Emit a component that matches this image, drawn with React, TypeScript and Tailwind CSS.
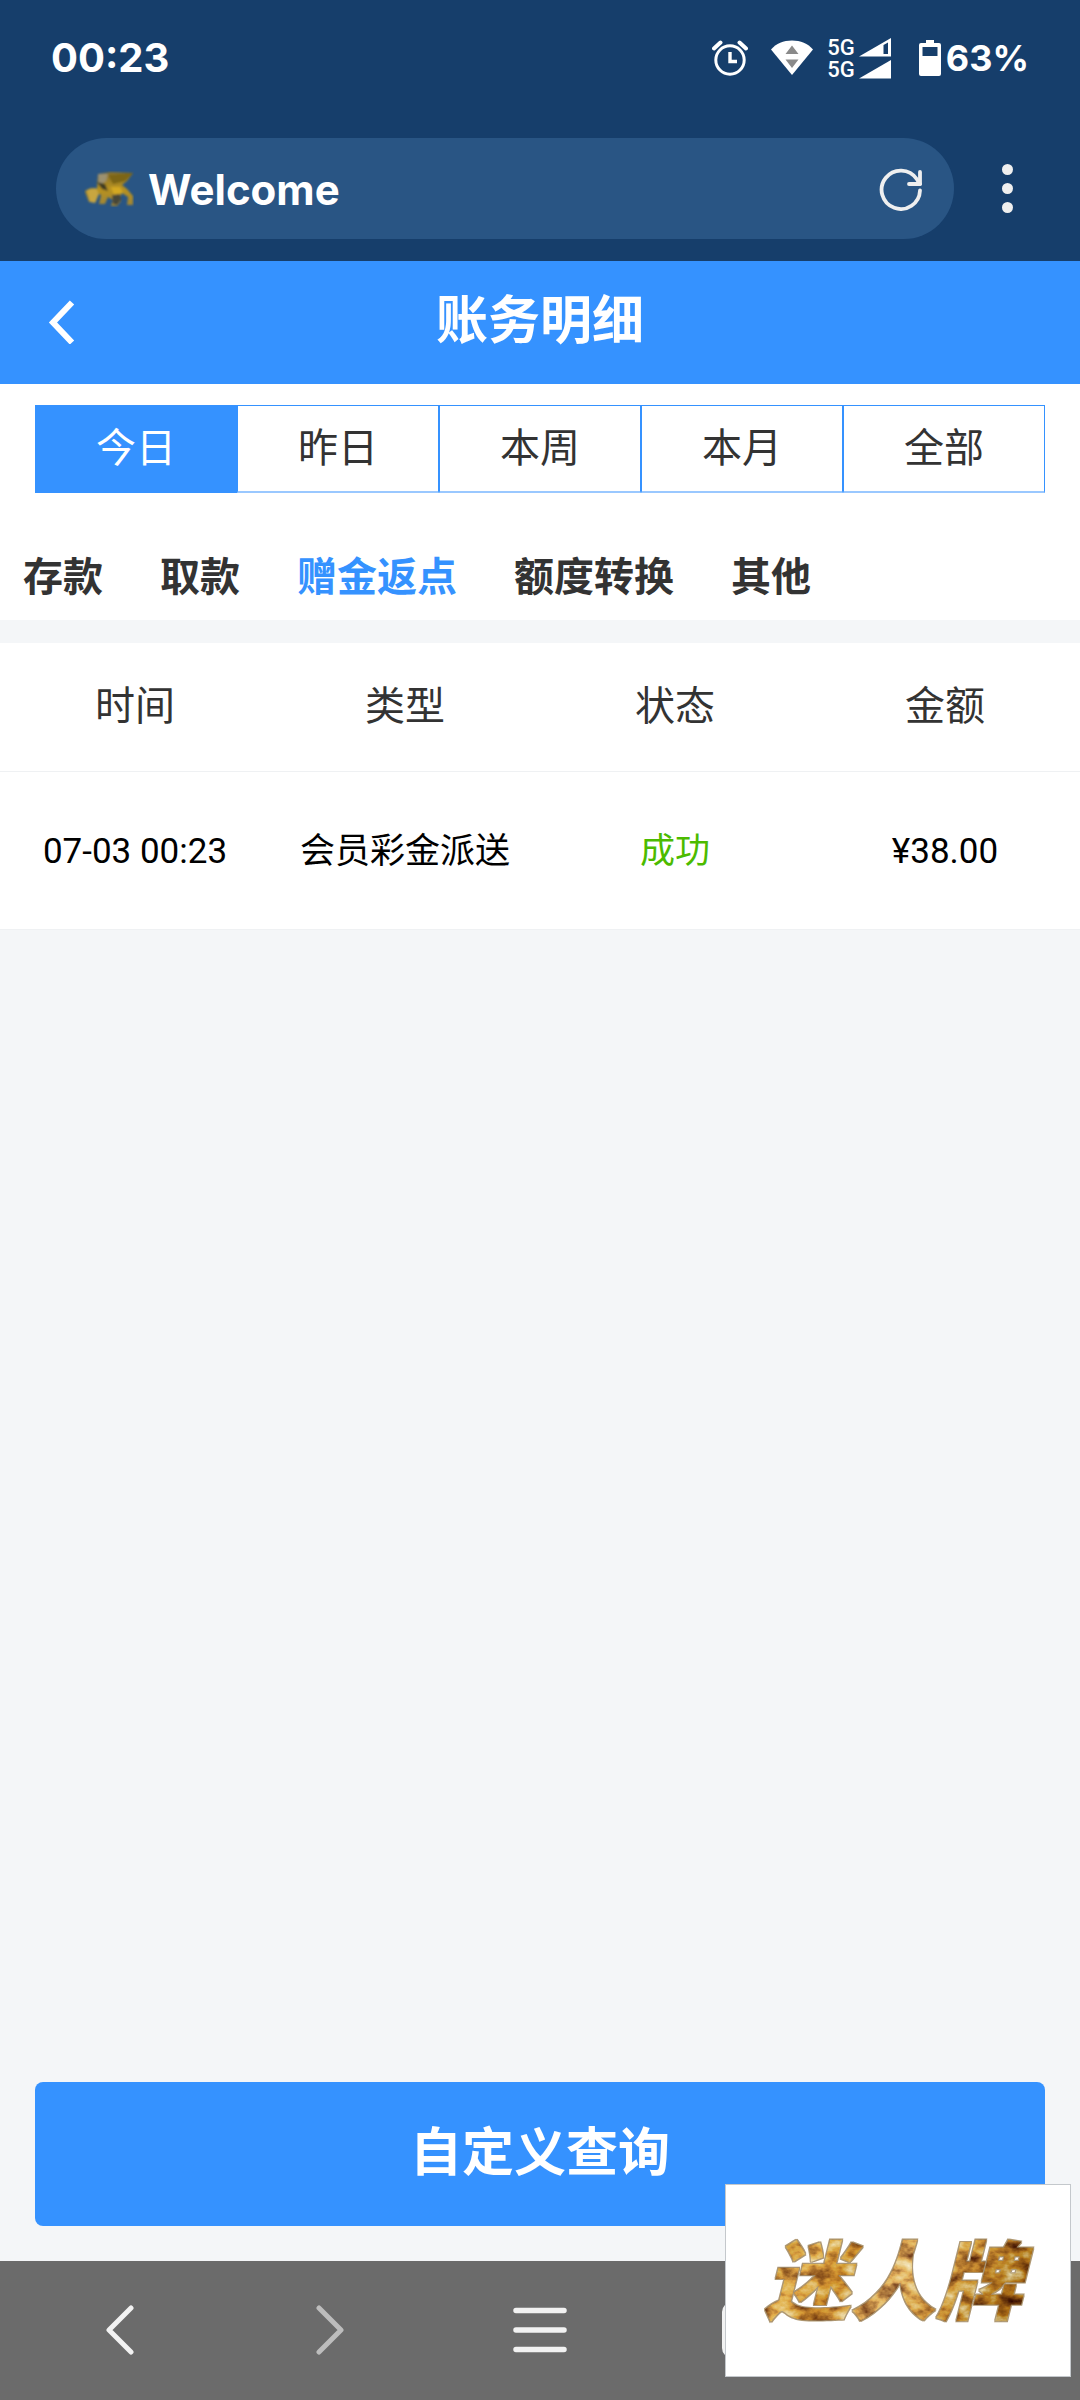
import { useState } from "react";

const cjk = "font-[Roboto,'Noto_Sans_CJK_SC',sans-serif]";

const PERIODS = ["今日", "昨日", "本周", "本月", "全部"];
const CATEGORIES = ["存款", "取款", "赠金返点", "额度转换", "其他"];
const RECORDS = [
  { time: "07-03 00:23", type: "会员彩金派送", status: "成功", amount: "¥38.00" },
];

function AlarmIcon() {
  return (
    <svg className="h-9 w-9" viewBox="0 0 36 36" fill="none" stroke="white" aria-hidden="true">
      <circle cx="18" cy="20" r="14.2" strokeWidth="3" />
      <path d="M18 12v9.5h7" strokeWidth="3.4" />
      <path d="M2 8.5 8.5 2.5M34 8.5 27.5 2.5" strokeWidth="4" strokeLinecap="round" />
    </svg>
  );
}

function WifiIcon() {
  return (
    <svg className="h-9 w-[42px]" viewBox="0 0 42 36" aria-hidden="true">
      <path d="M0 9.5C5 3.5 12.5.5 21 .5S37 3.5 42 9.5L21 35Z" fill="white" />
      <path d="M21 5.5 27.5 14h-13ZM21 28l-6.5-8.5h13Z" fill="#8a8a8a" />
    </svg>
  );
}

function SignalIcon({ partial = false }: { partial?: boolean }) {
  return (
    <svg className="h-[19px] w-8" viewBox="0 0 32 19" aria-hidden="true">
      <path d="M0 18.5 32 0v18.5Z" fill="white" />
      {partial && <path d="M24.5 7 29 4.5V16h-4.5Z" fill="#163e6b" />}
    </svg>
  );
}

function BatteryIcon() {
  return (
    <svg className="h-9 w-[22px]" viewBox="0 0 22 36" aria-hidden="true">
      <path d="M7 0h8v3h5a2 2 0 0 1 2 2v29a2 2 0 0 1-2 2H2a2 2 0 0 1-2-2V5a2 2 0 0 1 2-2h5Z" fill="white" />
      <path d="M3.5 7h15v9h-15Z" fill="#163e6b" />
    </svg>
  );
}

function LionIcon() {
  return (
    <svg className="h-9 w-[50px]" viewBox="0 0 50 36" aria-hidden="true">
      <defs>
        <linearGradient id="lion" x1="0" y1="0" x2="0" y2="1">
          <stop offset="0" stopColor="#85702f" />
          <stop offset=".5" stopColor="#b8921f" />
          <stop offset="1" stopColor="#9d8438" />
        </linearGradient>
        <filter id="soft"><feGaussianBlur stdDeviation="1" /></filter>
      </defs>
      <g filter="url(#soft)">
        <path d="M14 3 27 1l22 1-6 8-5 4 5 4 6 7v9h-6l1-8-6-4-2 4 1 4-4 5h-6l2-6-5-3-3 7h-6l2-9-4-2-1 9H5L1 20l6-3 6 1Z" fill="url(#lion)" />
        <path d="M14 3h10l-2 7-7 5Z" fill="#9c9170" />
        <path d="M24 4 49 2l-8 8-12 3Z" fill="#7c6515" />
        <path d="m13 11 8 2 3 7-6-2Z" fill="#3c3a20" />
        <path d="m27 16 9 0 3 6-9 2Z" fill="#d3a823" />
        <path d="m28 24 8-1 1 6-4 5-4-1Z" fill="#474637" />
        <path d="m3 19 9-2 3 6-4 9-5-1Z" fill="#c8a640" />
      </g>
    </svg>
  );
}

function BrandLogo() {
  return (
    <svg className="h-[140px] w-[320px]" viewBox="0 0 320 140" role="img" aria-label="迷人牌">
      <defs>
        <linearGradient id="gold" x1="0" y1="0" x2="1" y2=".3">
          <stop offset="0" stopColor="#b07a1c" />
          <stop offset=".25" stopColor="#e0b054" />
          <stop offset=".4" stopColor="#cc9230" />
          <stop offset=".6" stopColor="#e4bc70" />
          <stop offset=".8" stopColor="#d09c40" />
          <stop offset="1" stopColor="#a8701a" />
        </linearGradient>
        <filter id="foil" x="-10%" y="-10%" width="120%" height="120%" colorInterpolationFilters="sRGB">
          <feTurbulence type="fractalNoise" baseFrequency="0.05 0.07" numOctaves="4" seed="7" result="noise" />
          <feColorMatrix in="noise" type="matrix" values="0.9 0 0 0 .05  1.1 0 0 0 -.08  1.1 0 0 0 -.12  0 0 0 0 1" result="tone" />
          <feBlend in="tone" in2="SourceGraphic" mode="hard-light" result="mix" />
          <feComposite in="mix" in2="SourceAlpha" operator="in" result="face" />
          <feMorphology in="SourceAlpha" operator="dilate" radius="0.6" result="fat" />
          <feFlood floodColor="#7a5210" floodOpacity=".6" />
          <feComposite in2="fat" operator="in" result="edge" />
          <feMerge>
            <feMergeNode in="edge" />
            <feMergeNode in="face" />
          </feMerge>
        </filter>
      </defs>
      <text
        x="155"
        y="102"
        textAnchor="middle"
        fill="url(#gold)"
        filter="url(#foil)"
        className="font-['Noto_Sans_CJK_SC',sans-serif] text-[86px] font-black italic"
      >
        迷人牌
      </text>
    </svg>
  );
}

function StatusBar() {
  return (
    <div className="flex h-[116px] items-center justify-between pr-[51px] pl-[51px] font-[Inter,sans-serif] font-bold text-white">
      <span className="text-[40px]">00:23</span>
      <div className="flex items-center">
        <AlarmIcon />
        <div className="ml-[23px]"><WifiIcon /></div>
        <div className="ml-[14px] flex flex-col gap-[3px] font-[Roboto,sans-serif] text-[22px] leading-[19px] font-medium">
          <div className="flex items-center gap-1">5G <SignalIcon partial /></div>
          <div className="flex items-center gap-1">5G <SignalIcon /></div>
        </div>
        <div className="mr-[5px] ml-7"><BatteryIcon /></div>
        <span className="text-[36px]">63%</span>
      </div>
    </div>
  );
}

function AddressBar() {
  return (
    <div className="flex items-center pt-[22px] pb-[22px] pl-14">
      <div className="flex h-[101px] flex-1 items-center rounded-full bg-[#295584] pr-[31px] pl-7">
        <LionIcon />
        <span className="ml-[14px] flex-1 pt-0.5 font-[Inter,sans-serif] text-[42px] font-bold text-white">Welcome</span>
        <button type="button" aria-label="Reload">
          <svg className="h-11 w-11" viewBox="0 0 44 44" fill="none" stroke="#efefef" strokeWidth="3.8" strokeLinecap="round" strokeLinejoin="round" aria-hidden="true">
            <path d="M41 23.5a19.2 19.2 0 1 1-3.3-11.5L41 17" />
            <path d="M41 5v12H30" />
          </svg>
        </button>
      </div>
      <button type="button" aria-label="Menu" className="flex w-[126px] flex-col items-center gap-2 pr-5">
        <span className="size-[11px] rounded-full bg-[#efefef]" />
        <span className="size-[11px] rounded-full bg-[#efefef]" />
        <span className="size-[11px] rounded-full bg-[#efefef]" />
      </button>
    </div>
  );
}

function BrowserNav() {
  return (
    <nav className="grid h-[139px] grid-cols-5 bg-[#6b6b6b] px-[15px] pb-0.5">
      <button type="button" aria-label="Back" className="flex items-center justify-center text-[#f2f2f2]">
        <svg className="h-[50px] w-7" viewBox="0 0 28 50" fill="none" stroke="currentColor" strokeWidth="5" strokeLinecap="round" strokeLinejoin="round" aria-hidden="true"><path d="M25 3 3 25l22 22" /></svg>
      </button>
      <button type="button" aria-label="Forward" className="flex items-center justify-center text-[#bdbdbd]">
        <svg className="h-[50px] w-7" viewBox="0 0 28 50" fill="none" stroke="currentColor" strokeWidth="5" strokeLinecap="round" strokeLinejoin="round" aria-hidden="true"><path d="m3 3 22 22L3 47" /></svg>
      </button>
      <button type="button" aria-label="Main menu" className="flex items-center justify-center text-[#f2f2f2]">
        <svg className="h-[46px] w-[54px]" viewBox="0 0 54 46" fill="none" stroke="currentColor" strokeWidth="5.5" strokeLinecap="round" aria-hidden="true"><path d="M3 3.5h48M3 23h48M3 42.5h48" /></svg>
      </button>
      <button type="button" aria-label="Tabs" className="flex items-center justify-center">
        <span className="size-14 rounded-[10px] border-[5px] border-[#f2f2f2]" />
      </button>
      <button type="button" aria-label="Home" className="flex items-center justify-center" />
    </nav>
  );
}

export default function App() {
  const [period, setPeriod] = useState("今日");
  const [category, setCategory] = useState("赠金返点");

  return (
    <div className={`relative flex min-h-screen flex-col bg-[#f4f6f8] text-[#333] ${cjk}`}>
      <div className="bg-[#163e6b]">
        <StatusBar />
        <AddressBar />
      </div>

      <header className="grid h-[123px] grid-cols-[120px_1fr_120px] items-center bg-[#3592ff] text-white">
        <button type="button" aria-label="返回" className="pb-0.5 pl-12">
          <svg className="h-11 w-7" viewBox="0 0 28 44" fill="none" stroke="currentColor" strokeWidth="6" aria-hidden="true"><path d="M24 2.5 5 22.5l19 20" /></svg>
        </button>
        <h1 className="pb-0.5 text-center text-[52px] leading-[60px] font-bold">账务明细</h1>
      </header>

      <div className="bg-white pt-[21px]">
        <div className="mx-[35px] grid h-[88px] grid-cols-5">
          {PERIODS.map((p) => (
            <button
              key={p}
              type="button"
              aria-pressed={p === period}
              onClick={() => setPeriod(p)}
              className={`border border-b-2 border-[#3592ff] text-[40px] leading-none ${p === period ? "bg-[#3592ff] text-white" : "border-b-[#9ac8ff] bg-white"}`}
            >
              {p}
            </button>
          ))}
        </div>
        <div className="flex h-[127px] gap-[57px] pt-[55px] pl-[23px]">
          {CATEGORIES.map((c) => (
            <button
              key={c}
              type="button"
              aria-pressed={c === category}
              onClick={() => setCategory(c)}
              className={`h-[60px] text-[40px] leading-[60px] font-bold whitespace-nowrap ${c === category ? "text-[#3592ff]" : ""}`}
            >
              {c}
            </button>
          ))}
        </div>
      </div>

      <table className="mt-[23px] w-full table-fixed border-collapse bg-white text-center">
        <thead>
          <tr className="h-32 border-b border-[#eff1f3] text-[40px]">
            {["时间", "类型", "状态", "金额"].map((h) => (
              <th key={h} scope="col" className="font-normal">{h}</th>
            ))}
          </tr>
        </thead>
        <tbody>
          {RECORDS.map((r) => (
            <tr key={r.time} className="h-[158px] border-b border-[#eff1f3] text-[35px] text-black">
              <td className="pt-1">{r.time}</td>
              <td className="pt-1">{r.type}</td>
              <td className="pt-1 text-[#4cbb00]">{r.status}</td>
              <td className="pt-1">{r.amount}</td>
            </tr>
          ))}
        </tbody>
      </table>

      <div className="mt-auto px-[35px] pb-[35px]">
        <button type="button" className="h-36 w-full rounded-lg bg-[#3592ff] text-[52px] font-bold text-white">自定义查询</button>
      </div>

      <BrowserNav />

      <div className="absolute right-[9px] bottom-[23px] flex h-[193px] w-[346px] items-center justify-center border border-[#c4c8cc] bg-white">
        <BrandLogo />
      </div>
    </div>
  );
}
